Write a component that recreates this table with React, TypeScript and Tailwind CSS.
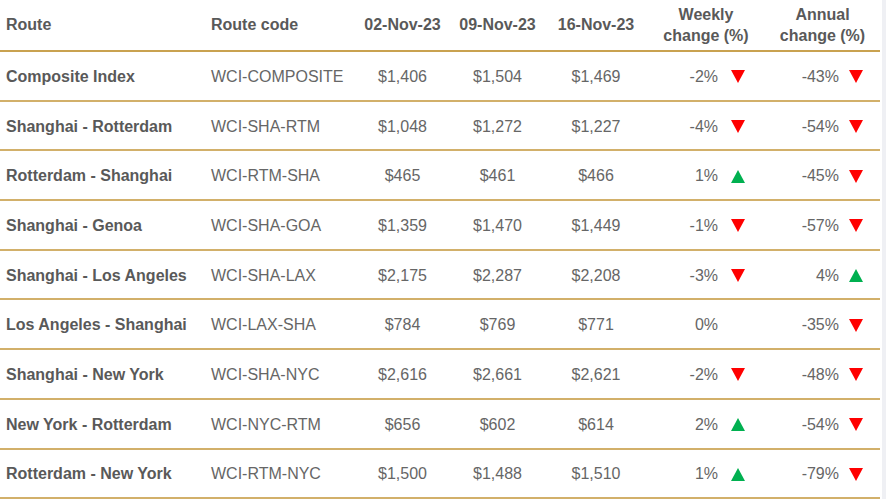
import React from "react";

type Row = {
  route: string;
  code: string;
  d1: string;
  d2: string;
  d3: string;
  weekly: string;
  weeklyDir: "up" | "down" | null;
  annual: string;
  annualDir: "up" | "down" | null;
};

const rows: Row[] = [
  { route: "Composite Index", code: "WCI-COMPOSITE", d1: "$1,406", d2: "$1,504", d3: "$1,469", weekly: "-2%", weeklyDir: "down", annual: "-43%", annualDir: "down" },
  { route: "Shanghai - Rotterdam", code: "WCI-SHA-RTM", d1: "$1,048", d2: "$1,272", d3: "$1,227", weekly: "-4%", weeklyDir: "down", annual: "-54%", annualDir: "down" },
  { route: "Rotterdam - Shanghai", code: "WCI-RTM-SHA", d1: "$465", d2: "$461", d3: "$466", weekly: "1%", weeklyDir: "up", annual: "-45%", annualDir: "down" },
  { route: "Shanghai - Genoa", code: "WCI-SHA-GOA", d1: "$1,359", d2: "$1,470", d3: "$1,449", weekly: "-1%", weeklyDir: "down", annual: "-57%", annualDir: "down" },
  { route: "Shanghai - Los Angeles", code: "WCI-SHA-LAX", d1: "$2,175", d2: "$2,287", d3: "$2,208", weekly: "-3%", weeklyDir: "down", annual: "4%", annualDir: "up" },
  { route: "Los Angeles - Shanghai", code: "WCI-LAX-SHA", d1: "$784", d2: "$769", d3: "$771", weekly: "0%", weeklyDir: null, annual: "-35%", annualDir: "down" },
  { route: "Shanghai - New York", code: "WCI-SHA-NYC", d1: "$2,616", d2: "$2,661", d3: "$2,621", weekly: "-2%", weeklyDir: "down", annual: "-48%", annualDir: "down" },
  { route: "New York - Rotterdam", code: "WCI-NYC-RTM", d1: "$656", d2: "$602", d3: "$614", weekly: "2%", weeklyDir: "up", annual: "-54%", annualDir: "down" },
  { route: "Rotterdam - New York", code: "WCI-RTM-NYC", d1: "$1,500", d2: "$1,488", d3: "$1,510", weekly: "1%", weeklyDir: "up", annual: "-79%", annualDir: "down" },
];

const cols = "grid grid-cols-[205px_150px_95px_95px_102px_118px_115px]";

const Arrow = ({ dir }: { dir: "up" | "down" | null }) => {
  if (!dir) return <span className="w-[13px]" />;
  return (
    <svg width="14" height="13" viewBox="0 0 14 13">
      {dir === "down" ? (
        <polygon points="0,0 14,0 7,13" fill="#ff0000" />
      ) : (
        <polygon points="0,13 14,13 7,0" fill="#00b050" />
      )}
    </svg>
  );
};

export default function App() {
  return (
    <div className="w-[886px] h-[499px] bg-white flex font-['Liberation_Sans',Arial,sans-serif] text-[16px] overflow-hidden">
      <div className="w-[880px]">
        {/* header */}
        <div className={`${cols} h-[52px] border-b-2 border-[#c9a250] font-bold text-[#595959] items-center`}>
          <div className="pl-[6px]">Route</div>
          <div className="pl-[6px]">Route code</div>
          <div className="text-center">02-Nov-23</div>
          <div className="text-center">09-Nov-23</div>
          <div className="text-center">16-Nov-23</div>
          <div className="text-center leading-[21px]">Weekly<br />change (%)</div>
          <div className="text-center leading-[21px]">Annual<br />change (%)</div>
        </div>

        {/* rows */}
        {rows.map((r) => (
          <div
            key={r.code}
            className={`${cols} h-[49.7px] pt-[2px] border-b-2 border-[#d2b06a] items-center text-[#666666]`}
          >
            <div className="pl-[6px] font-bold text-[#595959]">{r.route}</div>
            <div className="pl-[6px]">{r.code}</div>
            <div className="text-center">{r.d1}</div>
            <div className="text-center">{r.d2}</div>
            <div className="text-center">{r.d3}</div>
            <div className="flex items-center">
              <span className="w-[71px] text-right">{r.weekly}</span>
              <span className="ml-[13px] flex"><Arrow dir={r.weeklyDir} /></span>
            </div>
            <div className="flex items-center">
              <span className="w-[74px] text-right">{r.annual}</span>
              <span className="ml-[10px] flex"><Arrow dir={r.annualDir} /></span>
            </div>
          </div>
        ))}
      </div>
      <div className="w-[2px]" />
      <div className="w-[4px] bg-[#eff0f4]" />
    </div>
  );
}
